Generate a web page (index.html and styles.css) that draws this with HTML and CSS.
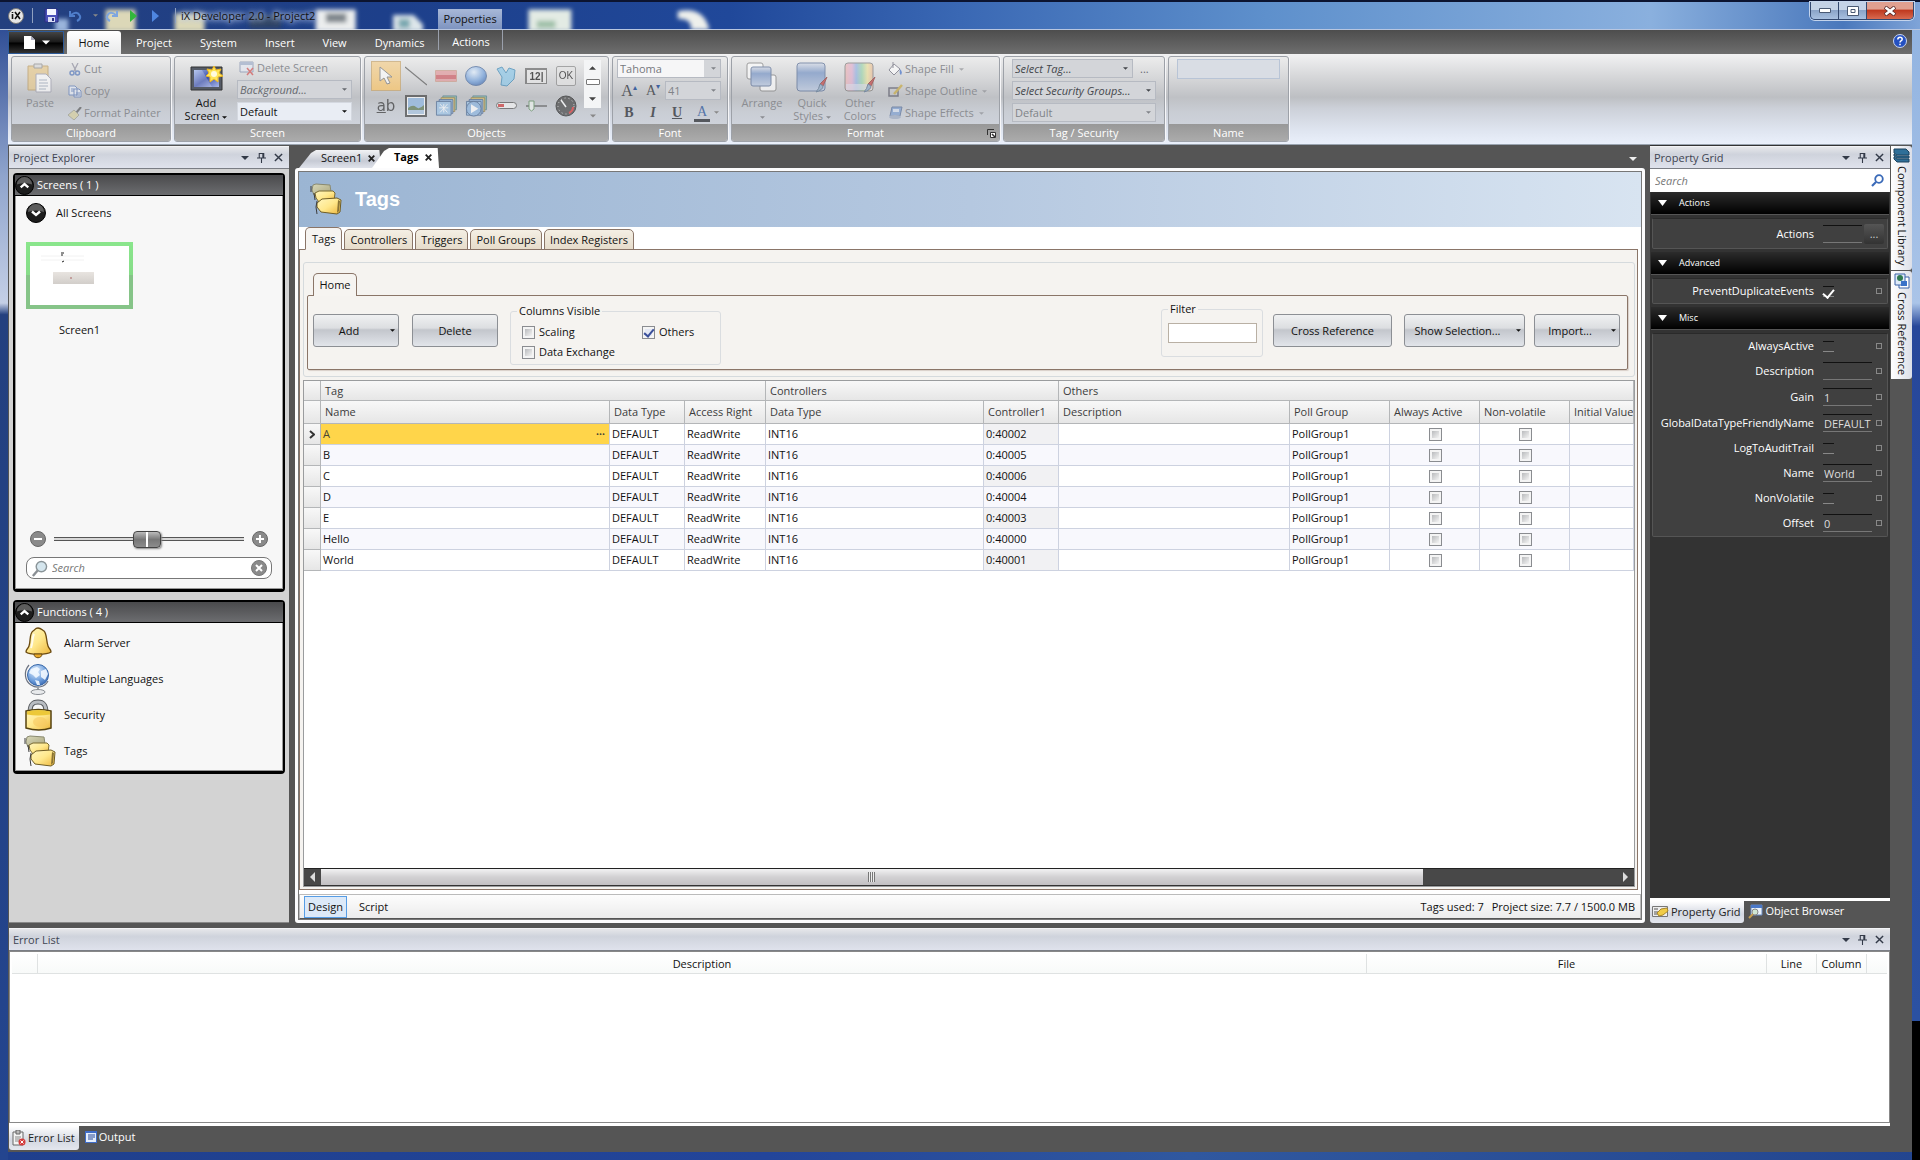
FILE: index.html
```html
<!DOCTYPE html>
<html lang="en">
<head>
<meta charset="utf-8">
<title>iX Developer 2.0 - Project2</title>
<link rel="stylesheet" href="styles.css">
</head>
<body>
<svg class="defs" aria-hidden="true">
  <defs>
    <linearGradient id="gold" x1="0" y1="0" x2="1" y2="1"><stop offset="0" stop-color="#fff6c0"/><stop offset=".5" stop-color="#ffe88c"/><stop offset="1" stop-color="#ecb53c"/></linearGradient>
    <linearGradient id="olive" x1="0" y1="0" x2="1" y2="1"><stop offset="0" stop-color="#d8d8b8"/><stop offset="1" stop-color="#aaa680"/></linearGradient>
    <linearGradient id="steel" x1="0" y1="0" x2="0" y2="1"><stop offset="0" stop-color="#d5dbe8"/><stop offset=".35" stop-color="#6f8fc4"/><stop offset="1" stop-color="#bccbe4"/></linearGradient>
    <linearGradient id="screenfill" x1="0" y1="0" x2="1" y2="1"><stop offset="0" stop-color="#9db4ea"/><stop offset=".5" stop-color="#3c50a8"/><stop offset="1" stop-color="#a9b8ea"/></linearGradient>
    <radialGradient id="ball" cx=".4" cy=".3" r=".8"><stop offset="0" stop-color="#e4f1ff"/><stop offset=".6" stop-color="#6f9fdc"/><stop offset="1" stop-color="#2d5ca8"/></radialGradient>
    <linearGradient id="rainbow"><stop offset="0" stop-color="#f0b4b0"/><stop offset=".25" stop-color="#e0aed0"/><stop offset=".4" stop-color="#8fb0e4"/><stop offset=".6" stop-color="#98d4aa"/><stop offset=".8" stop-color="#eee29a"/><stop offset="1" stop-color="#eeb898"/></linearGradient>
  </defs>
  <symbol id="i-tags" viewBox="0 0 32 32">
    <path d="M3 2 6 1l14 1 1 7-9 3H4L2 7z" fill="url(#olive)" stroke="#8a8a70"/>
    <path d="M5 10 9 8l14 0 2 2-1 8-15 1-3-4z" fill="url(#gold)" stroke="#7a6a30"/>
    <path d="M7 20l5-4 15-1 4 2-1 12-3 2-16-2-4-5z" fill="url(#gold)" stroke="#6f5d25"/>
    <path d="M28 17l2 1-1 10-2 2z" fill="#8a7434"/>
    <path d="M1 3v6M4 10l1 7M7 18l-1 6 1 7" fill="none" stroke="#3c3c3c"/>
  </symbol>
  <symbol id="i-bell" viewBox="0 0 28 32">
    <path d="M14 1c3 0 4 2 6 3 3 3 2 9 4 15 1 3 3 3 3 6-4 3-22 3-25 0 0-3 2-3 3-6C7 13 5 7 9 4c2-1 2-3 5-3z" fill="url(#gold)" stroke="#6b4a10" stroke-width="1.3"/>
    <path d="M10 27c0 5 8 5 8 0z" fill="#e8a92a" stroke="#6b4a10"/>
    <path d="M10 7c-2 4-1 9-3 14" fill="none" stroke="#fff" stroke-width="2" opacity=".8"/>
  </symbol>
  <symbol id="i-globe" viewBox="0 0 28 32">
    <path d="M5 2C-1 9 1 18 7 22c6 4 14 2 17-4" fill="none" stroke="#6d7380" stroke-width="1.2"/>
    <circle cx="14" cy="12" r="10.500" fill="url(#ball)" stroke="#3767a8"/>
    <path d="M7 6l6-2 3 2-2 3 2 3-4 3-3-3-4-2zM17 8l5-2 2 5-3 6-4-3zM11 17l4 1 1 4h-3z" fill="#f2f8ff" opacity=".9"/>
    <path d="M13 23h2v4h-2z" fill="#9aa0a8"/><ellipse cx="14" cy="29" rx="7" ry="2.500" fill="#e8eaec" stroke="#8a8e94"/>
  </symbol>
  <symbol id="i-lock" viewBox="0 0 28 32">
    <path d="M6 14c0-8 2-11 8-11s8 3 8 11" fill="none" stroke="#55585c" stroke-width="5"/>
    <path d="M6 14c0-8 2-11 8-11s8 3 8 11" fill="none" stroke="#b9bdc2" stroke-width="3"/>
    <path d="M2 12q12-3 25 0v17q-12 4-25 0z" fill="url(#gold)" stroke="#55420f" stroke-width="1.500"/>
    <path d="M3 12.500q11-3 23 0v3q-12 2-23 0z" fill="#ecc838"/>
    <ellipse cx="16" cy="23" rx="7" ry="5" fill="#f6c860" opacity=".6"/>
  </symbol>
  <symbol id="i-pin" viewBox="0 0 10 12"><path d="M2.500 1.500h5v5h-5zM0 6.500h10M5 7v5M6.500 2v4" fill="none" stroke="#333a48" stroke-width="1.200"/></symbol>
  <symbol id="i-x" viewBox="0 0 10 10"><path d="M1 1l8 8M9 1l-8 8" stroke="#333a48" stroke-width="1.600"/></symbol>
  <symbol id="i-down" viewBox="0 0 8 4"><path d="M0 0h8l-4 4z" fill="currentColor"/></symbol>
  <symbol id="i-up-round" viewBox="0 0 20 20"><circle cx="10" cy="10" r="9.500" fill="#1d1d1d" stroke="#000"/><path d="M2 9a8 8 0 0 1 16 0q-8-3-16 0z" fill="#5c5c5c"/><path d="M6 12l4-3.500 4 3.500" fill="none" stroke="#fff" stroke-width="2.400"/></symbol>
  <symbol id="i-down-round" viewBox="0 0 20 20"><circle cx="10" cy="10" r="9.500" fill="#1d1d1d" stroke="#000"/><path d="M2 9a8 8 0 0 1 16 0q-8-3-16 0z" fill="#5c5c5c"/><path d="M6 8.500l4 3.500 4-3.500" fill="none" stroke="#fff" stroke-width="2.400"/></symbol>
  <symbol id="i-lens" viewBox="0 0 18 18"><circle cx="11" cy="7" r="5.500" fill="#d5e6ee" stroke="#8a9498" stroke-width="1.500"/><path d="M7 11l-5 6" stroke="#8a8f94" stroke-width="2.500"/></symbol>
  <symbol id="i-brush" viewBox="0 0 14 16"><path d="M13 0l-4 9-3-2z" fill="#c23a3a" stroke="#8a2a2a"/><path d="M6 7l3 2q0 4-7 6 3-3 4-8z" fill="#8aa8c8" stroke="#4f6a88"/></symbol>
  <symbol id="i-frames" viewBox="0 0 24 24">
    <path d="M8 1h15v15H8z" fill="#7fb4a0" stroke="#4a7a8a"/><path d="M6 3h15v15H6z" fill="#e6c86a" stroke="#8a7434"/><path d="M4 5h15v15H4z" fill="#8ab4e0" stroke="#3a5a8a"/>
    <path d="M1 7h16v15H1z" fill="#9cc4e8" stroke="#3c5c88"/>
  </symbol>
</svg>

<div class="window">
  <header class="titlebar">
    <svg class="glass" viewBox="0 0 760 30" aria-hidden="true">
      <defs><filter id="soft" x="-20%" y="-40%" width="140%" height="180%"><feGaussianBlur stdDeviation="2.500"/></filter></defs>
      <g filter="url(#soft)">
        <path d="M86 8h32v24H86zM160 12h32v20h-32z" fill="#dcd8b8"/><path d="M32 18h14v14H32z" fill="#9ab4dc"/>
        <path d="M311 8h43v24h-43z" fill="#eceeee"/><path d="M322 12h22v10h-22zM240 14h34v14h-34z" fill="#39424c" opacity=".6"/>
        <path d="M394 14h22l10 10v8h-32z" fill="#dde6ea"/><path d="M400 18h12v10h-12z" fill="#7aa8b0"/>
        <path d="M539 8h46v24h-46z" fill="#e3ebe4"/><path d="M548 20h20v8h-20z" fill="#9fc0a8"/>
        <path d="M699 10q28-6 34 20h-20q2-12-14-12z" fill="#eef0ec"/>
      </g>
    </svg>
    <svg class="logo" width="16" height="16" viewBox="0 0 16 16" aria-hidden="true"><circle cx="8" cy="8" r="7.500" fill="#e6e6e6" stroke="#777"/><path d="M4.500 6v5M4.500 4v1M7 4l5 7M12 4l-5 7" stroke="#111" stroke-width="1.600"/></svg>
    <span class="tsep"></span>
    <button class="qa" aria-label="Save"><svg width="15" height="15" viewBox="0 0 15 15"><path d="M1 1h12l1 1v12H1z" fill="#4a50b8" stroke="#2a2f80"/><path d="M3 1h9v6H3z" fill="#f4f6ff"/><path d="M4 9h7v5H4z" fill="#d8dcf4"/><path d="M8 10h2v3H8z" fill="#2a2f80"/></svg></button>
    <button class="qa undo" aria-label="Undo"><svg width="13" height="12" viewBox="0 0 13 12"><path d="M2 5q6-5 9 1 1 3-3 5M1 1v5h5" fill="none" stroke="#4f7ecb" stroke-width="2"/></svg></button>
    <button class="qa more" aria-label="Undo history"><svg width="5" height="3" class="c-grey"><use href="#i-down"/></svg></button>
    <button class="qa redo" aria-label="Redo"><svg width="13" height="12" viewBox="0 0 13 12"><path d="M11 5Q5 0 2 6q-1 3 3 5M12 1v5H7" fill="none" stroke="#7fa6de" stroke-width="2"/></svg></button>
    <button class="qa run" aria-label="Run"><svg width="9" height="12" viewBox="0 0 9 12"><path d="M1 0l7 6-7 6z" fill="#32b83c"/></svg></button>
    <button class="qa sim" aria-label="Simulate"><svg width="9" height="12" viewBox="0 0 9 12"><path d="M1 0l7 6-7 6z" fill="#4f86e0"/></svg></button>
    <span class="tsep end"></span>
    <h1>iX Developer 2.0 - Project2</h1>
    <span class="context">Properties</span>
    <div class="winbtns">
      <button aria-label="Minimize"><svg width="12" height="6"><path d="M.5.5h11v4H.5z" fill="#fff" stroke="#4a5a74"/></svg></button>
      <button aria-label="Maximize"><svg width="12" height="10"><path d="M.5.5h11v9H.5zM4 3.500h4v3H4z" fill="#fff" stroke="#4a5a74"/></svg></button>
      <button class="close" aria-label="Close"><svg width="12" height="10" viewBox="0 0 12 10"><path d="M1 1l10 8M11 1L1 9" stroke="#5a2a2a" stroke-width="4"/><path d="M1.500 1.500l9 7M10.500 1.500l-9 7" stroke="#fff" stroke-width="2.500"/></svg></button>
    </div>
  </header>

  <div class="app">
    <nav class="menubar">
      <button class="file" aria-label="File"><svg width="13" height="15" viewBox="0 0 13 15"><path d="M1 1h7l4 4v9H1z" fill="#fff"/><path d="M8 1v4h4z" fill="#aab"/></svg><svg width="8" height="5"><use href="#i-down"/></svg></button>
      <button class="mtab on">Home</button>
      <button class="mtab">Project</button>
      <button class="mtab">System</button>
      <button class="mtab">Insert</button>
      <button class="mtab">View</button>
      <button class="mtab">Dynamics</button>
      <button class="mtab ctx">Actions</button>
      <button class="help" aria-label="Help"><svg width="14" height="14" viewBox="0 0 14 14"><circle cx="7" cy="7" r="6.500" fill="#2450c0" stroke="#c8d4f0"/><path d="M4.800 5.500q0-2.300 2.200-2.300t2.200 2q0 1-1.200 1.600-1 .6-1 1.700M7 9.700v1.500" fill="none" stroke="#fff" stroke-width="1.500"/></svg></button>
    </nav>

    <div class="ribbon">
      <section class="group clipboard">
        <div class="gbody">
          <button class="big off"><svg width="26" height="31" viewBox="0 0 26 31"><path d="M1 4h20v24H1z" fill="#e8c98a" stroke="#b8965a"/><path d="M7 2h8v4H7z" fill="#d8d8d8" stroke="#888"/><path d="M9 12h10l5 5v13H9z" fill="#fff" stroke="#99a"/><path d="M12 18h8M12 21h9M12 24h9M12 27h7" stroke="#99a6b8"/></svg><span>Paste</span></button>
          <div class="stack">
            <button class="line off"><svg width="12" height="13" viewBox="0 0 12 13"><path d="M3 0l4 8M9 0L5 8" stroke="#889" stroke-width="1.300"/><circle cx="3" cy="10" r="2" fill="none" stroke="#4f74b8" stroke-width="1.500"/><circle cx="8.500" cy="10" r="2" fill="none" stroke="#4f74b8" stroke-width="1.500"/></svg>Cut</button>
            <button class="line off"><svg width="14" height="13" viewBox="0 0 14 13"><path d="M1 1h6l2 2v7H1zM6 4h5l2 2v6H6z" fill="#eaf0fb" stroke="#5a7ab8"/><path d="M8 8h4M8 10h4M3 4h3M3 6h3" stroke="#5a7ab8"/></svg>Copy</button>
            <button class="line off"><svg width="14" height="13" viewBox="0 0 14 13"><path d="M13 0L8 6" stroke="#555" stroke-width="2"/><path d="M6 3l5 5-5 5-6-5z" fill="#d8cf9a" stroke="#998"/></svg>Format Painter</button>
          </div>
        </div>
        <h2>Clipboard</h2>
      </section>

      <section class="group screen">
        <div class="gbody">
          <button class="big"><svg width="33" height="26" viewBox="0 0 33 26"><path d="M1 2h31v23H1z" fill="#555b66" stroke="#333"/><path d="M4 5h25v17H4z" fill="url(#screenfill)"/><path d="M4 5h8l10 17H4z" fill="#fff" opacity=".25"/><path d="M24 1l2 4 5-1-2 4 4 3-5 1 0 5-4-3-4 3 0-5-4-1 3-3-2-4 5 1z" fill="#ffe65a" stroke="#f0b820"/><circle cx="24" cy="9" r="3" fill="#fffbe0"/></svg><span>Add<br>Screen <svg width="5" height="3"><use href="#i-down"/></svg></span></button>
          <div class="stack">
            <button class="line off"><svg width="16" height="15" viewBox="0 0 16 15"><path d="M1 1h13v10H1z" fill="#e4e8f2" stroke="#7a88a8"/><path d="M1 1h13v3H1z" fill="#9aaac8"/><path d="M8 7l6 7M14 7l-6 7" stroke="#d04848" stroke-width="1.500"/></svg>Delete Screen</button>
            <label class="drop it"><select aria-label="Background" disabled><option>Background...</option></select><svg width="5" height="3"><use href="#i-down"/></svg></label>
            <label class="drop lit"><select aria-label="Style"><option>Default</option></select><svg width="5" height="3"><use href="#i-down"/></svg></label>
          </div>
        </div>
        <h2>Screen</h2>
      </section>

      <section class="group objects">
        <div class="gbody">
          <div class="palette">
            <button class="on" aria-label="Select"><svg width="14" height="20" viewBox="0 0 14 20"><path d="M1 1v14l4-3 3 6 3-1-3-6h5z" fill="#fff" stroke="#777"/></svg></button>
            <button aria-label="Line"><svg width="22" height="20"><path d="M0 1l22 18" stroke="#555" stroke-width="1.200"/></svg></button>
            <button aria-label="Rectangle"><svg width="22" height="12"><path d="M.5.5h21v11H.5z" fill="#e4999c" stroke="#c98"/><path d="M1 5h20v4H1z" fill="#cf5a62"/></svg></button>
            <button aria-label="Ellipse"><svg width="22" height="20"><ellipse cx="11" cy="10" rx="10.500" ry="9.500" fill="url(#ball)" stroke="#47689a"/></svg></button>
            <button aria-label="Polygon"><svg width="20" height="21" viewBox="0 0 20 21"><path d="M1 3l5-2 4 6 3-5 6 2-1 9-7 7-6-1 1-8z" fill="#8cc8ea" stroke="#3a86b4"/></svg></button>
            <button aria-label="Analog numeric"><span class="num">12|</span></button>
            <button aria-label="Button"><span class="okb">OK</span></button>
            <button aria-label="Text"><span class="ab"><u>a</u>b</span></button>
            <button aria-label="Picture"><svg width="22" height="22"><path d="M1 1h20v20H1z" fill="#fff" stroke="#444" stroke-width="2"/><path d="M3 3h16v10H3z" fill="#8fb8e4"/><path d="M3 13q5-4 8-1t8-2v9H3z" fill="#5c7850"/><path d="M3 15h16v4H3z" fill="#a8c4e0"/></svg></button>
            <button aria-label="Screen navigation"><svg width="23" height="22" viewBox="0 0 24 24"><use href="#i-frames"/><path d="M4 14h10M9 10v9M5 10l8 9M13 10l-8 9" stroke="#fff"/></svg></button>
            <button aria-label="Media"><svg width="23" height="22" viewBox="0 0 24 24"><use href="#i-frames"/><circle cx="9" cy="15" r="8" fill="#8ab4e0" stroke="#3c5c88"/><path d="M6 10l8 5-8 5z" fill="#fff"/></svg></button>
            <button aria-label="Linear meter"><svg width="21" height="8"><rect x=".5" y=".5" width="20" height="6" rx="3" fill="#f4f4f4" stroke="#555"/><path d="M2 2h6v3H2z" fill="#d23a3a"/></svg></button>
            <button aria-label="Slider"><svg width="21" height="12"><path d="M0 6h21" stroke="#555" stroke-width="1.500"/><path d="M3 1h5v8l-2.500 2L3 9z" fill="#eef4ee" stroke="#5a8a5a"/></svg></button>
            <button aria-label="Gauge"><svg width="22" height="22"><circle cx="11" cy="11" r="10" fill="#444" stroke="#222"/><circle cx="11" cy="11" r="8" fill="none" stroke="#ddd" stroke-dasharray="1 3"/><path d="M11 12L6 5" stroke="#fff" stroke-width="1.500"/><path d="M18 12q0 4-4 6" stroke="#e03030" stroke-width="2" fill="none"/></svg></button>
          </div>
          <div class="pscroll">
            <div class="pbox"><svg width="7" height="4" viewBox="0 0 8 4"><path d="M0 4h8L4 0z" fill="#444"/></svg><i></i><svg width="7" height="4"><use href="#i-down"/></svg></div>
            <svg width="6" height="4" class="c-grey"><use href="#i-down"/></svg>
          </div>
        </div>
        <h2>Objects</h2>
      </section>

      <section class="group font">
        <div class="gbody">
          <label class="drop fam"><select aria-label="Font family" disabled><option>Tahoma</option></select><svg width="5" height="3"><use href="#i-down"/></svg></label>
          <div class="frow"><button class="glyph big-a" aria-label="Grow font">A<sup>▴</sup></button><button class="glyph" aria-label="Shrink font">A<sup>▾</sup></button><label class="drop size"><select aria-label="Font size" disabled><option>41</option></select><svg width="5" height="3"><use href="#i-down"/></svg></label></div>
          <div class="frow"><button class="glyph"><b>B</b></button><button class="glyph"><b><i>I</i></b></button><button class="glyph"><b><u>U</u></b></button><button class="glyph fc">A</button><svg width="5" height="3" class="c-grey"><use href="#i-down"/></svg></div>
        </div>
        <h2>Font</h2>
      </section>

      <section class="group format">
        <div class="gbody">
          <button class="big off"><svg width="32" height="31" viewBox="0 0 32 31"><rect x="1" y="1" width="16" height="16" rx="2" fill="#fff" stroke="#777"/><rect x="14" y="13" width="16" height="16" rx="2" fill="#fff" stroke="#777"/><rect x="5" y="5" width="20" height="19" rx="2" fill="url(#steel)" stroke="#4f6690"/></svg><span>Arrange<br><svg width="5" height="3"><use href="#i-down"/></svg></span></button>
          <button class="big off"><svg width="33" height="31" viewBox="0 0 33 31"><rect x="1" y="1" width="28" height="28" rx="3" fill="url(#steel)" stroke="#4f6690"/><svg x="18" y="15" width="14" height="16"><use href="#i-brush"/></svg></svg><span>Quick<br>Styles <svg width="5" height="3"><use href="#i-down"/></svg></span></button>
          <button class="big off"><svg width="33" height="31" viewBox="0 0 33 31"><rect x="1" y="1" width="28" height="28" rx="3" fill="url(#rainbow)" stroke="#777"/><path d="M2 22h26v6H2z" fill="#dde" opacity=".7"/><svg x="18" y="15" width="14" height="16"><use href="#i-brush"/></svg></svg><span>Other<br>Colors</span></button>
          <div class="stack">
            <button class="line off"><svg width="15" height="14" viewBox="0 0 15 14"><path d="M6 2l6 5-6 6-5-5z" fill="#fff" stroke="#667"/><path d="M5 6V0" stroke="#667"/><path d="M12 7q3 3 1 6-2-1-1-6z" fill="#3a6ac8"/></svg>Shape Fill <svg width="5" height="3"><use href="#i-down"/></svg></button>
            <button class="line off"><svg width="15" height="14" viewBox="0 0 15 14"><path d="M1 4h9v8H1z" fill="none" stroke="#556" stroke-width="1.500"/><path d="M14 1L6 10" stroke="#c8a83a" stroke-width="2.500"/></svg>Shape Outline <svg width="5" height="3"><use href="#i-down"/></svg></button>
            <button class="line off"><svg width="15" height="14" viewBox="0 0 15 14"><path d="M4 1h10l-2 9H2z" fill="#7a9cd0" stroke="#4f6690"/><ellipse cx="7" cy="11" rx="6" ry="2" fill="#9aa8c0"/><path d="M5 3h6v3H5z" fill="#fff" opacity=".7"/></svg>Shape Effects <svg width="5" height="3"><use href="#i-down"/></svg></button>
          </div>
        </div>
        <h2>Format</h2>
        <button class="launcher" aria-label="Format options"><svg width="9" height="9"><path d="M.5 6V.5H7" fill="none" stroke="#333"/><path d="M3.500 3.500h5v5h-5z" fill="#fff" stroke="#333"/><path d="M5 5l3 3" stroke="#333" stroke-width="1.500"/></svg></button>
      </section>

      <section class="group tagsec">
        <div class="gbody">
          <div class="frow"><label class="drop it dark"><select aria-label="Tag" disabled><option>Select Tag...</option></select><svg width="5" height="3"><use href="#i-down"/></svg></label><button class="dots">...</button></div>
          <label class="drop it dark"><select aria-label="Security groups" disabled><option>Select Security Groups...</option></select><svg width="5" height="3"><use href="#i-down"/></svg></label>
          <label class="drop"><select aria-label="Visibility" disabled><option>Default</option></select><svg width="5" height="3"><use href="#i-down"/></svg></label>
        </div>
        <h2>Tag / Security</h2>
      </section>

      <section class="group name">
        <div class="gbody"><input type="text" aria-label="Object name" disabled></div>
        <h2>Name</h2>
      </section>
    </div>

    <div class="work">
      <aside class="panel explorer">
        <header class="phead"><h2>Project Explorer</h2><button aria-label="Menu"><svg width="8" height="4"><use href="#i-down"/></svg></button><button aria-label="Pin"><svg width="9" height="11"><use href="#i-pin"/></svg></button><button aria-label="Close"><svg width="9" height="9"><use href="#i-x"/></svg></button></header>
        <div class="exbody">
          <section class="box screens">
            <h3><svg width="19" height="19"><use href="#i-up-round"/></svg>Screens ( 1 )</h3>
            <div class="boxin">
              <button class="all"><svg width="20" height="20"><use href="#i-down-round"/></svg>All Screens</button>
              <figure>
                <svg width="107" height="67" viewBox="0 0 107 67"><defs><linearGradient id="gr" x1="0" y1="0" x2="0" y2="1"><stop offset="0" stop-color="#8ae68c"/><stop offset=".5" stop-color="#86dc88"/><stop offset=".5" stop-color="#86c488"/></linearGradient><linearGradient id="btn" x1="0" y1="0" x2="0" y2="1"><stop offset="0" stop-color="#e8e4e0"/><stop offset="1" stop-color="#d2ceca"/></linearGradient></defs><path d="M0 0h107v67H0z" fill="url(#gr)"/><path d="M4 4h99v59H4z" fill="#fff"/><path d="M15 14h43M15 18h43" stroke="#f2f2f2"/><path d="M35 11h3M35 13h2M36 20l2-1" stroke="#222"/><path d="M27 30h41v12H27z" fill="url(#btn)"/><path d="M45 35v2" stroke="#a66"/></svg>
                <figcaption>Screen1</figcaption>
              </figure>
              <div class="zoomer">
                <button aria-label="Smaller"><svg width="16" height="16"><circle cx="8" cy="8" r="7.500" fill="#8a8a8a" stroke="#666"/><path d="M4 8h8" stroke="#fff" stroke-width="2"/></svg></button>
                <input type="range" min="0" max="100" value="49" aria-label="Thumbnail size">
                <button aria-label="Larger"><svg width="16" height="16"><circle cx="8" cy="8" r="7.500" fill="#8a8a8a" stroke="#666"/><path d="M4 8h8M8 4v8" stroke="#fff" stroke-width="2"/></svg></button>
              </div>
              <label class="find"><svg width="17" height="17"><use href="#i-lens"/></svg><input type="text" placeholder="Search" aria-label="Search screens"><svg width="16" height="16"><circle cx="8" cy="8" r="7.500" fill="#8a8a8a" stroke="#777"/><path d="M5 5l6 6M11 5l-6 6" stroke="#fff" stroke-width="2"/></svg></label>
            </div>
          </section>
          <section class="box functions">
            <h3><svg width="19" height="19"><use href="#i-up-round"/></svg>Functions ( 4 )</h3>
            <ul class="boxin">
              <li><svg width="28" height="32"><use href="#i-bell"/></svg>Alarm Server</li>
              <li><svg width="28" height="32"><use href="#i-globe"/></svg>Multiple Languages</li>
              <li><svg width="28" height="32"><use href="#i-lock"/></svg>Security</li>
              <li><svg width="32" height="32"><use href="#i-tags"/></svg>Tags</li>
            </ul>
          </section>
        </div>
      </aside>

      <main class="doc">
        <div class="doctabs">
          <button class="dtab">Screen1<svg width="7" height="7" viewBox="0 0 10 10"><path d="M1 1l8 8M9 1l-8 8" stroke="#222" stroke-width="2.600"/></svg></button>
          <button class="dtab on">Tags<svg width="7" height="7" viewBox="0 0 10 10"><path d="M1 1l8 8M9 1l-8 8" stroke="#222" stroke-width="2.600"/></svg></button>
          <button class="dmore" aria-label="Open documents"><svg width="8" height="4"><use href="#i-down"/></svg></button>
        </div>
        <div class="dframe">
          <div class="banner"><svg width="32" height="32"><use href="#i-tags"/></svg><h2>Tags</h2></div>
          <nav class="ptabs"><button class="on">Tags</button><button>Controllers</button><button>Triggers</button><button>Poll Groups</button><button>Index Registers</button></nav>
          <div class="page">
            <div class="tools">
              <button class="htab">Home</button>
              <div class="tpanel">
                <button class="btn add"><span>Add</span><svg width="5" height="3"><use href="#i-down"/></svg></button>
                <button class="btn del"><span>Delete</span></button>
                <fieldset class="cols"><legend>Columns Visible</legend>
                  <label><input type="checkbox">Scaling</label><label><input type="checkbox" checked>Others</label><label><input type="checkbox">Data Exchange</label>
                </fieldset>
                <fieldset class="filter"><legend>Filter</legend><input type="text" aria-label="Filter"></fieldset>
                <button class="btn cross"><span>Cross Reference</span></button>
                <button class="btn show"><span>Show Selection...</span><svg width="5" height="3"><use href="#i-down"/></svg></button>
                <button class="btn imp"><span>Import...</span><svg width="5" height="3"><use href="#i-down"/></svg></button>
              </div>
            </div>
            <div class="gridwrap">
              <table class="grid">
                <colgroup><col class="w-ind"><col class="w-name"><col class="w-type"><col class="w-acc"><col class="w-ctype"><col class="w-ctl"><col><col class="w-poll"><col class="w-chk"><col class="w-chk"><col class="w-init"></colgroup>
                <thead>
                  <tr class="bands"><th></th><th colspan="3">Tag</th><th colspan="2">Controllers</th><th colspan="5">Others</th></tr>
                  <tr><th></th><th>Name</th><th>Data Type</th><th>Access Right</th><th>Data Type</th><th>Controller1</th><th>Description</th><th>Poll Group</th><th>Always Active</th><th>Non-volatile</th><th>Initial Value</th></tr>
                </thead>
                <tbody>
                  <tr class="sel"><th><svg width="6" height="9"><path d="M1 1l4 3.500-4 3.500" fill="none" stroke="#333" stroke-width="2"/></svg></th><td><span>A</span><button aria-label="Edit">•••</button></td><td>DEFAULT</td><td>ReadWrite</td><td>INT16</td><td>0:40002</td><td></td><td>PollGroup1</td><td><input type="checkbox" aria-label="Always active A"></td><td><input type="checkbox" aria-label="Non-volatile A"></td><td></td></tr>
                  <tr><th></th><td>B</td><td>DEFAULT</td><td>ReadWrite</td><td>INT16</td><td>0:40005</td><td></td><td>PollGroup1</td><td><input type="checkbox" aria-label="Always active B"></td><td><input type="checkbox" aria-label="Non-volatile B"></td><td></td></tr>
                  <tr><th></th><td>C</td><td>DEFAULT</td><td>ReadWrite</td><td>INT16</td><td>0:40006</td><td></td><td>PollGroup1</td><td><input type="checkbox" aria-label="Always active C"></td><td><input type="checkbox" aria-label="Non-volatile C"></td><td></td></tr>
                  <tr><th></th><td>D</td><td>DEFAULT</td><td>ReadWrite</td><td>INT16</td><td>0:40004</td><td></td><td>PollGroup1</td><td><input type="checkbox" aria-label="Always active D"></td><td><input type="checkbox" aria-label="Non-volatile D"></td><td></td></tr>
                  <tr><th></th><td>E</td><td>DEFAULT</td><td>ReadWrite</td><td>INT16</td><td>0:40003</td><td></td><td>PollGroup1</td><td><input type="checkbox" aria-label="Always active E"></td><td><input type="checkbox" aria-label="Non-volatile E"></td><td></td></tr>
                  <tr><th></th><td>Hello</td><td>DEFAULT</td><td>ReadWrite</td><td>INT16</td><td>0:40000</td><td></td><td>PollGroup1</td><td><input type="checkbox" aria-label="Always active Hello"></td><td><input type="checkbox" aria-label="Non-volatile Hello"></td><td></td></tr>
                  <tr><th></th><td>World</td><td>DEFAULT</td><td>ReadWrite</td><td>INT16</td><td>0:40001</td><td></td><td>PollGroup1</td><td><input type="checkbox" aria-label="Always active World"></td><td><input type="checkbox" aria-label="Non-volatile World"></td><td></td></tr>
                </tbody>
              </table>
              <div class="hscroll"><button aria-label="Scroll left"><svg width="5" height="10"><path d="M5 0v10L0 5z" fill="#ddd"/></svg></button><div class="track"><div class="thumb"><i></i></div></div><button aria-label="Scroll right"><svg width="5" height="10"><path d="M0 0v10l5-5z" fill="#ddd"/></svg></button></div>
            </div>
          </div>
          <footer class="status"><button class="on">Design</button><button>Script</button><span class="used">Tags used: 7</span><span>Project size: 7.7 / 1500.0 MB</span></footer>
        </div>
      </main>

      <aside class="props">
        <div class="panel pg">
          <header class="phead"><h2>Property Grid</h2><button aria-label="Menu"><svg width="8" height="4"><use href="#i-down"/></svg></button><button aria-label="Pin"><svg width="9" height="11"><use href="#i-pin"/></svg></button><button aria-label="Close"><svg width="9" height="9"><use href="#i-x"/></svg></button></header>
          <label class="psearch"><input type="text" placeholder="Search" aria-label="Search properties"><svg width="13" height="13" viewBox="0 0 13 13"><circle cx="8" cy="5" r="3.800" fill="none" stroke="#3a6ab8" stroke-width="1.800"/><path d="M5 8l-4 4" stroke="#3a6ab8" stroke-width="2.200"/></svg></label>
          <h3><svg width="9" height="6" viewBox="0 0 8 4" preserveAspectRatio="none"><path d="M0 0h8L4 4z" fill="#fff"/></svg>Actions</h3>
          <div class="sect act"><div class="prow"><label for="p-act">Actions</label><input type="text" id="p-act"><button class="pick">...</button></div></div>
          <h3><svg width="9" height="6" viewBox="0 0 8 4" preserveAspectRatio="none"><path d="M0 0h8L4 4z" fill="#fff"/></svg>Advanced</h3>
          <div class="sect"><div class="prow chk"><label for="p-dup">PreventDuplicateEvents</label><input type="checkbox" id="p-dup" checked><i></i></div></div>
          <h3><svg width="9" height="6" viewBox="0 0 8 4" preserveAspectRatio="none"><path d="M0 0h8L4 4z" fill="#fff"/></svg>Misc</h3>
          <div class="sect">
            <div class="prow chk"><label for="p1">AlwaysActive</label><input type="checkbox" id="p1"><i></i></div>
            <div class="prow"><label for="p2">Description</label><input type="text" id="p2"><i></i></div>
            <div class="prow"><label for="p3">Gain</label><input type="text" id="p3" value="1"><i></i></div>
            <div class="prow"><label for="p4">GlobalDataTypeFriendlyName</label><input type="text" id="p4" value="DEFAULT"><i></i></div>
            <div class="prow chk"><label for="p5">LogToAuditTrail</label><input type="checkbox" id="p5"><i></i></div>
            <div class="prow"><label for="p6">Name</label><input type="text" id="p6" value="World"><i></i></div>
            <div class="prow chk"><label for="p7">NonVolatile</label><input type="checkbox" id="p7"><i></i></div>
            <div class="prow"><label for="p8">Offset</label><input type="text" id="p8" value="0"><i></i></div>
          </div>
        </div>
        <div class="btabs">
          <button class="on"><svg width="17" height="13" viewBox="0 0 17 13"><path d="M.5 1.500h15v10H.5z" fill="#eee" stroke="#777"/><path d="M2 4h4M2 7h4M2 9h4" stroke="#555"/><path d="M5 8l4-4 6-1 1 3-5 4-4 1z" fill="#f0cc48" stroke="#a8862a"/></svg>Property Grid</button>
          <button><svg width="15" height="15" viewBox="0 0 15 15"><path d="M3 1h11v10H3z" fill="#eaf2fb" stroke="#6a8ac0"/><path d="M3 1h11v3H3z" fill="#4a78c8"/><circle cx="7" cy="8" r="3" fill="#cfe6d4" stroke="#888"/><path d="M5 10l-4 4" stroke="#c8a050" stroke-width="2"/></svg>Object Browser</button>
        </div>
      </aside>

      <nav class="sidetabs">
        <button><svg width="17" height="15" viewBox="0 0 17 15"><path d="M1 1h12l3 3v3H4L1 5zM1 6l3 2h12v2H4L1 8zM1 9l3 2h12v3H4l-3-3z" fill="#2f6f98" stroke="#1d4560"/></svg>Component Library</button>
        <button><svg width="16" height="16" viewBox="0 0 16 16"><path d="M5 4h10v11H5z" fill="#fff" stroke="#3a62a8"/><path d="M1 1h10v11H1z" fill="#dfeaf8" stroke="#3a62a8"/><circle cx="6" cy="5" r="3" fill="#2f7a50"/><path d="M7 8h6v5H7z" fill="#3a72c8"/></svg>Cross Reference</button>
      </nav>
    </div>

    <section class="errors">
      <div class="panel epanel">
        <header class="phead"><h2>Error List</h2><button aria-label="Menu"><svg width="8" height="4"><use href="#i-down"/></svg></button><button aria-label="Pin"><svg width="9" height="11"><use href="#i-pin"/></svg></button><button aria-label="Close"><svg width="9" height="9"><use href="#i-x"/></svg></button></header>
        <div class="elist"><table><colgroup><col class="e0"><col><col class="e2"><col class="e3"><col class="e3"><col class="e4"></colgroup><thead><tr><th></th><th>Description</th><th>File</th><th>Line</th><th>Column</th><th></th></tr></thead></table></div>
      </div>
      <div class="btabs">
        <button class="on"><svg width="15" height="16" viewBox="0 0 15 16"><path d="M2 2h10v13H2z" fill="#f4f4f4" stroke="#666"/><path d="M5 0h4v4H5z" fill="#bbb" stroke="#666"/><path d="M4 7h6M4 9h5M4 11h4" stroke="#888"/><circle cx="11" cy="12" r="3.500" fill="#d43c3c"/><path d="M9.500 10.500l3 3M12.500 10.500l-3 3" stroke="#fff"/></svg>Error List</button>
        <button><svg width="12" height="12" viewBox="0 0 12 12"><path d="M0 0h12v12H0z" fill="#3f6cc8"/><path d="M1 2h10v9H1z" fill="#e4edfb"/><path d="M3 4h7M3 6h7M3 8h5" stroke="#2a4a98"/></svg>Output</button>
      </div>
    </section>
  </div>
</div>
</body>
</html>
```

FILE: styles.css
```css
:root {
  --ui: "Open Sans", "Noto Sans", sans-serif;
  --slate: #555;
}
* { box-sizing: border-box; }
body { margin: 0; background: #000; font: 11px/14px var(--ui); color: #111; }
h1, h2, h3, figure, ul, fieldset { margin: 0; padding: 0; font-size: inherit; font-weight: normal; }
ul { list-style: none; }
button, input, select { font: inherit; color: inherit; margin: 0; padding: 0; border: 0; background: none; border-radius: 0; }
select { appearance: none; opacity: 1; }
svg { flex: none; display: block; }
input { min-width: 0; outline: 0; }
.defs { position: absolute; width: 0; height: 0; }
.c-grey { color: #888; }

/* window frame */
.window {
  min-height: 100vh; display: flex; flex-direction: column; padding: 0 8px 8px;
  border-top: 2px solid #0c1430;
  background:
    linear-gradient(#8fb2e0 0, #aac4e8 26%, #27479a 28%, #2b51a2 88%, #000 88%) right top / 8px 100% no-repeat,
    linear-gradient(#1f3f8c 0, #8fa4cc 15%, #c4cfe6 26%, #24407f 27%, #24458f 100%) left top / 8px 100% no-repeat,
    linear-gradient(90deg, #1f3f8c 0, #23459a 40%, #30589f 62%, #23458f 100%) #23458f;
}
.titlebar {
  position: relative; height: 28px; margin: 0 -8px; padding-left: 8px; display: flex; align-items: center;
  background: linear-gradient(90deg, #24407f 0, #1d3f8a 20%, #20489a 38%, #3a68b4 50%, #5e90cc 66%, #8ab0de 86%, #4a78bc 96%, #7fa4d8 100%);
  border-bottom: 1px solid #b8c6e0;
}
.titlebar > * { position: relative; }
.titlebar > .glass { position: absolute; left: 0; top: 0; width: 760px; height: 28px; }
.tsep { width: 1px; height: 15px; background: #8fa0c0; margin: 0 11px 0 8px; }
.tsep.end { margin: 0 5px 0 15px; }
.qa { height: 16px; display: grid; place-items: center; }
.undo { margin-left: 10px; }
.more { margin-left: 11px; }
.redo { margin-left: 7px; }
.run { margin-left: 11px; }
.sim { margin-left: 13px; }
h1 { width: 257px; text-shadow: 0 0 4px #b8c8e8, 0 0 6px #b8c8e8, 0 0 8px #b8c8e8; }
.context { align-self: flex-end; width: 64px; height: 20px; line-height: 20px; text-align: center; background: linear-gradient(#a8b8d8, #7e94c0); }
.winbtns { margin-left: auto; margin-right: 6px; align-self: flex-start; display: flex; height: 18px; border: 1px solid #33486e; border-top: 0; border-radius: 0 0 5px 5px; overflow: hidden; box-shadow: 0 0 0 1px #c4d4ec; }
.winbtns button { width: 28px; display: grid; place-items: center; background: linear-gradient(#c4d2e6 45%, #8ba4c8 50%, #a8c0e0); border-right: 1px solid #33486e; }
.winbtns .close { width: 46px; border: 0; background: linear-gradient(#e0a090 40%, #c03a20 50%, #d86a50); }

.app { flex: 1; display: flex; flex-direction: column; background: var(--slate); }

/* menu bar */
.menubar { height: 24px; display: flex; align-items: flex-end; background: linear-gradient(#4d4d4d, #6e6e6e); color: #fff; }
.file { width: 56px; height: 23px; border: 1px solid #2d5a98; background: linear-gradient(#444 0, #1a1a1a 48%, #000 52%, #333); display: flex; align-items: center; justify-content: center; gap: 6px; margin-right: 3px; }
.mtab { height: 23px; padding: 1px 14px 0; }
.mtab.on { width: 54px; padding: 1px 0 0; color: #111; background: linear-gradient(#fff, #e8e9ea); border-radius: 3px 3px 0 0; margin-right: 1px; }
.mtab.ctx { align-self: flex-start; width: 65px; height: 20px; padding: 4px 0 0; border: solid #9aa0ac; border-width: 0 1px; }
.help { margin: 0 5px 6px auto; }

/* ribbon */
.ribbon {
  height: 91px; padding: 2px 3px 2px; display: flex; gap: 3px;
  background: linear-gradient(#f2f2f3 0, #d6d7d9 25%, #bdbfc3 48%, #ccd0d8 60%, #dfe5f0 85%, #eaf0fb 100%);
  border-bottom: 1px solid #9aa4b0;
}
.group { position: relative; display: flex; flex-direction: column; flex: none; border: 1px solid #9da1a8; border-radius: 3px; background: linear-gradient(#ececec 0, #d6d7d9 25%, #bfc1c5 48%, #c9cdd4 65%, #d4d9e2 100%); overflow: hidden; box-shadow: 1px 0 0 #f6f6f8; }
.group h2 { height: 17px; line-height: 17px; text-align: center; color: #fff; background: linear-gradient(#989898, #ababab); }
.gbody { flex: 1; display: flex; min-height: 0; }
.clipboard { width: 160px; } .screen { width: 187px; } .objects { width: 245px; } .font { width: 116px; } .format { width: 269px; } .tagsec { width: 162px; } .name { width: 121px; }
.big { display: flex; flex-direction: column; align-items: center; padding-top: 5px; text-align: center; line-height: 13px; gap: 3px; }
.big span { min-height: 26px; }
.big span svg, .line svg:last-child:not(:first-child) { display: inline-block; vertical-align: middle; }
.off, .group .off { color: #8b8d92; }
.off > svg { opacity: .65; }
.stack { display: flex; flex-direction: column; }
.line { display: flex; align-items: center; height: 22px; gap: 2px; text-align: left; white-space: nowrap; }
.clipboard .big { width: 56px; }
.clipboard .stack, .format .stack { padding-top: 1px; }
.clipboard .line svg { width: 14px; }
.screen .big { width: 62px; padding-top: 8px; gap: 5px; }
.screen .stack { flex: 1; padding-right: 8px; gap: 3px; padding-top: 3px; }
.screen .line { height: 16px; padding-left: 2px; margin-bottom: 1px; }
.drop { display: flex; align-items: center; height: 19px; border: 1px solid #b6bac2; background: #d3d5d9; color: #808388; padding: 0 4px 0 2px; }
.drop select { flex: 1; min-width: 0; height: 17px; color: inherit; }
.drop.it { font-style: italic; color: #66696e; }
.drop.dark { color: #44474c; }
.drop.lit { background: #e9edf4; color: #111; border-color: #d4d8e0; }

.palette { display: grid; grid-template-columns: repeat(7, 30px); grid-template-rows: 30px 30px; padding: 4px 0 0 6px; opacity: .68; }
.palette button { display: grid; place-items: center; }
.palette .on { background: linear-gradient(#f5cf8e, #ffc765); border: 1px solid #c8a468; }
.num { border: 1px solid #666; border-width: 2px 1px 1px 2px; background: #e8e8e8; font: bold 10px/13px "Liberation Sans", sans-serif; padding: 0 3px; }
.okb { border: 1px solid #888; border-radius: 2px; background: #e4e4e4; font: 10px/18px "Liberation Sans", sans-serif; width: 20px; }
.ab { font: 15px/20px "DejaVu Sans", sans-serif; color: #333; }
.pscroll { display: flex; flex-direction: column; align-items: center; gap: 6px; padding: 3px 0 0 3px; }
.pbox { width: 17px; height: 48px; background: #f4f5f6; display: flex; flex-direction: column; align-items: center; justify-content: space-between; padding: 6px 0 7px; color: #444; }
.pbox i { width: 14px; height: 6px; border: 1px solid #777; border-radius: 1px; background: #fff; margin-bottom: 4px; }

.font .gbody, .tagsec .gbody { flex-direction: column; gap: 3px; padding: 2px 6px 0 4px; }
.frow { display: flex; align-items: center; height: 19px; }
.fam { background: linear-gradient(90deg, #f6f6f7 86px, #d3d5d9 86px); }
.fam select { color: #77797e; }
.glyph { width: 24px; text-align: center; font: 14px/18px "Liberation Serif", serif; color: #55585e; white-space: nowrap; }
.glyph sup { font-size: 8px; line-height: 8px; color: #3f62a0; }
.glyph.big-a { font-size: 16px; }
.glyph.fc { color: #5474a8; border-bottom: 3px solid #55585e; width: 16px; line-height: 15px; margin: 0 4px 0 5px; }
.size { width: 56px; }
.format .big { width: 48px; }
.format .big:first-child { width: 56px; padding-left: 4px; }
.format .stack { padding-left: 4px; }
.format .line svg + svg { margin-left: 3px; }
.launcher { position: absolute; right: 3px; bottom: 3px; }
.tagsec .gbody { padding: 2px 8px 0; }
.tagsec .frow .drop { width: 125px; }
.dots { width: 24px; line-height: 10px; color: #66696e; }
.name .gbody { padding: 2px 8px; }
.name input { width: 100%; height: 20px; background: #d9dde4; border: 1px solid #b8c4d6; }

/* work area */
.work { flex: 1; display: flex; min-height: 400px; padding-left: 1px; }
.phead { display: flex; align-items: center; height: 23px; padding: 0 6px 0 4px; gap: 8px; background: linear-gradient(#e6e7ea 0, #cfd3dc 35%, #dfe2ec 100%); border-bottom: 1px solid #7a7d84; border-top: 1px solid #f2f3f6; color: #3f4552; }
.phead h2 { flex: 1; }
.phead button { display: grid; place-items: center; }
.phead svg { color: #333a48; }
.explorer { width: 280px; margin: 1px 6px 5px 0; display: flex; flex-direction: column; background: #d3d3d3; border-bottom: 1px solid #888; }
.exbody { padding: 4px 4px 0; display: flex; flex-direction: column; gap: 8px; }
.box { border: 2px solid #000; border-bottom-width: 3px; border-radius: 4px; background: #f7f7f7; }
.box h3 { display: flex; align-items: center; height: 21px; gap: 3px; color: #fff; background: linear-gradient(#4a4a4c, #6c6d70); border-bottom: 1px solid #000; }
.boxin { display: flex; flex-direction: column; border: 1px solid #999; border-top: 0; }
.screens .boxin { height: 393px; padding: 6px 10px 9px; }
.all { display: flex; align-items: center; gap: 10px; height: 22px; }
figure { width: 107px; margin-top: 18px; text-align: center; }
figcaption { margin-top: 14px; }
.zoomer { margin-top: auto; display: flex; align-items: center; gap: 8px; padding: 0 4px; }
.zoomer input { appearance: none; flex: 1; height: 18px; background: linear-gradient(#555 1px, #d8d8d8 1px, #d8d8d8 3px, #555 3px) center / 100% 4px no-repeat; }
.zoomer input::-webkit-slider-thumb { appearance: none; width: 28px; height: 17px; border: 1px solid #444; border-radius: 4px; background: linear-gradient(90deg, transparent 12px, #fff 12px, #fff 14px, transparent 14px), linear-gradient(#bbb, #777 50%, #8c8c8c); box-shadow: 1px 1px 2px #888; }
.find { display: flex; align-items: center; gap: 4px; height: 22px; margin-top: 9px; padding: 0 4px; border: 1px solid #777; border-radius: 8px; background: #fff; }
.find input { flex: 1; }
::placeholder { color: #777; opacity: 1; font-style: italic; }
.functions .boxin { height: 148px; padding: 2px 8px 0; }
.functions li { display: flex; align-items: center; height: 36px; }
.functions li svg { margin-right: 12px; }
.functions li svg[width="32"] { margin-right: 8px; }

.doc { flex: 1; min-width: 0; display: flex; flex-direction: column; margin-bottom: 5px; }
.doctabs { display: flex; align-items: flex-end; height: 23px; padding-left: 4px; }
.dtab { height: 18px; width: 82px; display: flex; align-items: center; padding: 0 0 2px 22px; gap: 6px; background: linear-gradient(#f2f3f5, #c6cad4 60%, #dfe2ea); clip-path: polygon(0 100%, 12px 3px, 17px 0, 98% 0, 100% 100%); }
.dtab.on { height: 20px; width: 67px; padding-left: 22px; margin-left: -9px; background: #fff; font-weight: bold; color: #000; }
.dmore { margin: 0 8px 7px auto; color: #eee; }
.dframe { flex: 1; display: flex; flex-direction: column; border: 3px solid #fcfcfd; border-radius: 3px; box-shadow: inset 0 0 0 1px #777; background: #fff; padding: 1px; }
.banner { height: 55px; display: flex; align-items: center; gap: 13px; padding: 0 0 2px 11px; background: linear-gradient(90deg, #9bb5d3 0, #b5c8e0 50%, #d8e4f1 100%); color: #fff; }
.banner h2 { font: bold 20px/24px "Liberation Sans", sans-serif; }
.ptabs { display: flex; align-items: flex-end; gap: 2px; height: 23px; padding-left: 6px; margin-bottom: -1px; position: relative; }
.ptabs button { height: 21px; padding: 0 5px; border: 1px solid #8a7568; border-radius: 5px 5px 0 0; background: linear-gradient(#f4efe4, #e6dccb); white-space: nowrap; }
.ptabs .on { height: 23px; padding: 0 6px; background: #f6f4f1; border-bottom-color: #f6f4f1; }
.page { flex: 1; display: flex; flex-direction: column; margin-right: 3px; border: 1px solid #8a7568; background: #f5f3f0; padding: 12px 2px 2px 3px; }
.tools { border: 1px solid #d5dadd; border-radius: 3px; padding: 10px 6px 6px 3px; margin-bottom: 3px; }
.htab { height: 23px; width: 44px; margin-left: 6px; border: 1px solid #8a7568; border-bottom: 0; border-radius: 5px 5px 0 0; background: #f6f4f1; position: relative; display: block; }
.tpanel { margin-top: -1px; height: 75px; border: 1px solid #8a7568; border-radius: 2px; display: flex; align-items: flex-start; padding: 0 7px 0 5px; box-shadow: 1px 1px 1px #d9cfc8; }
.btn { display: flex; align-items: center; height: 33px; margin-top: 18px; padding: 0 3px; border: 1px solid #8c8f94; border-radius: 3px; background: linear-gradient(#f0f1f2 0, #dcdee1 42%, #c3c6cc 48%, #d3d6dc 75%, #e2e5ea 100%); white-space: nowrap; }
.btn span { flex: 1; text-align: center; }
.btn span:not(:last-child) { padding-right: 9px; }
.add { width: 86px; } .del { width: 86px; margin-left: 13px; } .cross { width: 119px; margin-left: 10px; } .show { width: 121px; margin-left: 12px; } .imp { width: 86px; margin-left: 9px; }
fieldset { border: 1px solid #dadde0; border-radius: 3px; min-width: 0; }
legend { padding: 0 2px; line-height: 14px; }
.cols { width: 211px; height: 61px; margin: 8px auto 0 12px; padding: 4px 0 0 11px; display: grid; grid-template-columns: 120px auto; grid-auto-rows: 20px; align-items: center; }
.cols legend { margin-left: -5px; }
.cols label { display: flex; align-items: center; gap: 4px; white-space: nowrap; }
.filter { width: 102px; height: 55px; margin-top: 6px; padding: 7px 6px 0; }
.filter input { width: 89px; height: 20px; display: block; border: 1px solid #b9b0a4; background: #fff; }
.page input[type="checkbox"] { appearance: none; width: 13px; height: 13px; border: 1px solid #8a8c90; background: linear-gradient(135deg, #a8aaad, #f2f2f2 80%); box-shadow: inset 0 0 0 2px #f4f4f4; display: grid; place-items: center; }
.page input[type="checkbox"]:checked { background: #e4e8f4; }
.page input:checked::after { content: ""; width: 4px; height: 8px; border: solid #3a4f9a; border-width: 0 2px 2px 0; transform: rotate(40deg); }

.gridwrap { flex: 1; display: flex; flex-direction: column; background: #fff; border: 1px solid #9a9c9e; overflow: hidden; }
.grid { width: 100%; table-layout: fixed; border-collapse: separate; border-spacing: 0; }
.w-ind { width: 17px; } .w-name { width: 289px; } .w-type { width: 75px; } .w-acc { width: 81px; } .w-ctype { width: 218px; } .w-ctl { width: 75px; } .w-poll { width: 100px; } .w-chk { width: 90px; } .w-init { width: 64px; }
.grid th, .grid td { height: 21px; padding: 0; border: solid #cdd2e0; border-width: 0 1px 1px 0; text-align: left; font-weight: normal; white-space: nowrap; overflow: hidden; }
.grid th { background: linear-gradient(#f8f8f8, #e6e6e6); border-color: #b4b6b8; color: #3c3c3c; }
.grid thead th { padding-left: 4px; height: 23px; }
.grid .bands th { height: 20px; }
.grid td { padding-left: 2px; }
.grid tbody tr:nth-child(even) td { background: #f8f8fd; }
.grid tbody td:nth-child(6) { background: #f1f1f3; }
.grid tbody th svg { margin: 0 auto; }
.grid td input { margin: 0 auto; }
.grid .sel td:nth-child(2) { background: #ffd54a; display: flex; align-items: center; justify-content: space-between; padding-right: 4px; color: #4a4634; }
.sel button { font-size: 8px; line-height: 8px; color: #4a4634; }
.hscroll { margin-top: auto; display: flex; height: 18px; background: #484848; border-top: 1px solid #222; border-bottom: 1px solid #333; }
.hscroll button { width: 17px; display: grid; place-items: center; }
.track { flex: 1; }
.thumb { width: 85%; height: 100%; display: grid; place-items: center; background: linear-gradient(#f2f2f3, #d2d1d3 50%, #c2c0c3); }
.thumb i { width: 7px; height: 10px; background: repeating-linear-gradient(90deg, #777 0, #777 1px, #eee 1px, #eee 2px); }
.status { display: flex; align-items: center; height: 25px; margin: 4px 0 0; padding: 0 5px 0 4px; border: 1px solid #bbb; border-bottom-color: #555; background: linear-gradient(#fdfdfd, #ececec); }
.status button { height: 22px; padding: 0 5px; border: 1px solid transparent; margin-right: 6px; }
.status .on { padding: 0 3px; border-color: #569de5; background: #dce9f8; }
.used { margin: 0 8px 0 auto; }

.props { width: 240px; margin: 0 1px 5px 5px; display: flex; flex-direction: column; }
.pg { flex: 1; background: #333; display: flex; flex-direction: column; border-bottom: 3px solid #fff; color: #fff; }
.props .phead, .pg .phead { margin-top: 1px; }
.psearch { display: flex; align-items: center; height: 23px; padding: 0 6px 0 5px; background: #fff; color: #111; }
.psearch input { flex: 1; }
.pg h3 { display: flex; align-items: center; gap: 12px; height: 23px; margin: 0 1px; padding-left: 7px; font-size: 9px; background: linear-gradient(#2c2c2c, #000); border-bottom: 1px solid #555; }
.sect { margin: 3px 2px; border: 1px solid #555; border-top-color: #2a2a2a; border-radius: 2px; background: #404040; }
.sect.act { padding: 2px 0 1px; }
.prow { display: flex; align-items: center; height: 26px; }
.prow.chk { height: 24px; }
.prow label { width: 161px; text-align: right; margin-right: 9px; white-space: nowrap; display: flex; justify-content: flex-end; }
.prow input[type="text"] { width: 49px; height: 18px; border: solid #111; border-width: 1px 0; border-bottom-color: #777; color: #ddd; padding-left: 1px; }
.prow input[type="checkbox"] { appearance: none; width: 11px; height: 11px; border: solid #111; border-width: 1px 0; border-bottom-color: #888; margin-right: 38px; display: grid; place-items: center; }
.prow input:checked::after { content: ""; width: 5px; height: 9px; margin-bottom: 4px; border: solid #fff; border-width: 0 2px 2px 0; transform: rotate(40deg); }
.prow i { width: 6px; height: 6px; margin-left: 4px; border: 1px solid #888; }
.act input[type="text"] { width: 39px; }
.pick { width: 20px; height: 20px; margin-left: 2px; border-radius: 2px; background: linear-gradient(#555, #333); color: #ccc; line-height: 12px; }

.btabs { display: flex; height: 22px; color: #fff; }
.btabs button { display: flex; align-items: center; gap: 2px; padding: 0 4px 2px; white-space: nowrap; }
.btabs .on { padding: 0 4px 1px 2px; color: #222; background: linear-gradient(#fff, #d4d8e2 60%, #e4e7ee); border-radius: 0 0 3px 3px; }

.sidetabs { width: 21px; display: flex; flex-direction: column; gap: 1px; padding-top: 1px; }
.sidetabs button { display: flex; align-items: center; justify-content: flex-start; gap: 3px; writing-mode: vertical-rl; width: 21px; height: 124px; padding-top: 2px; background: linear-gradient(90deg, #fff, #dcdfe8); border-radius: 0 3px 3px 0; white-space: nowrap; }
.sidetabs button + button { height: 108px; }

/* error list */
.errors { padding: 0 22px 2px 1px; }
.epanel { border-bottom: 3px solid #fff; }
.elist { height: 172px; background: #fff; border: 1px solid #888; padding: 2px 2px 1px; }
.elist table { width: 100%; table-layout: fixed; border-collapse: separate; border-spacing: 0; }
.elist th { height: 20px; padding: 0; font-weight: normal; text-align: center; border: solid #dfe2e2; border-width: 0 1px 1px 0; background: linear-gradient(#fff, #f8faf9); }
.elist th:last-child { border-right: 0; }
.e0 { width: 26px; } .e2 { width: 400px; } .e3 { width: 50px; } .e4 { width: 20px; }
.errors .btabs { height: 24px; gap: 2px; }
```
